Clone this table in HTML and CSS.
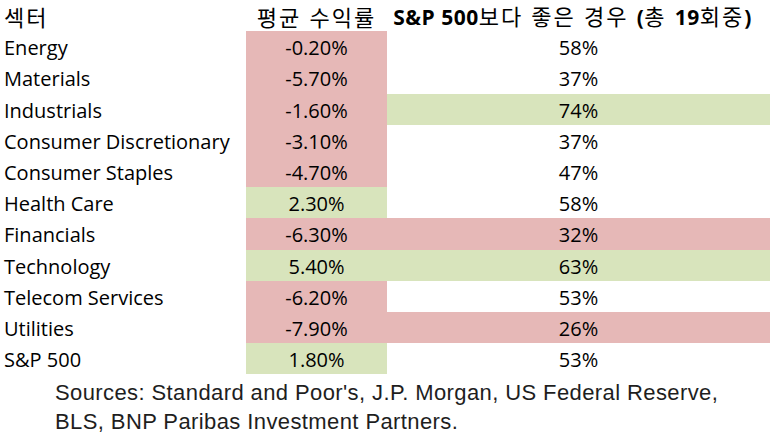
FILE: index.html
```html
<!DOCTYPE html>
<html lang="ko">
<head>
<meta charset="utf-8">
<link rel="stylesheet" href="styles.css">
</head>
<body>
<div class="table">
  <div class="cell head name">섹터</div>
  <div class="cell head center">평균 수익률</div>
  <div class="cell head center"><span class="wide"><b>S&amp;P 500</b>보다 좋은 경우 <b>(</b>총 <b>19</b>회중<b>)</b></span></div>

  <div class="cell name">Energy</div><div class="cell center neg">-0.20%</div><div class="cell center">58%</div>
  <div class="cell name">Materials</div><div class="cell center neg">-5.70%</div><div class="cell center">37%</div>
  <div class="cell name">Industrials</div><div class="cell center neg">-1.60%</div><div class="cell center pos">74%</div>
  <div class="cell name">Consumer Discretionary</div><div class="cell center neg">-3.10%</div><div class="cell center">37%</div>
  <div class="cell name">Consumer Staples</div><div class="cell center neg">-4.70%</div><div class="cell center">47%</div>
  <div class="cell name">Health Care</div><div class="cell center pos">2.30%</div><div class="cell center">58%</div>
  <div class="cell name">Financials</div><div class="cell center neg">-6.30%</div><div class="cell center neg">32%</div>
  <div class="cell name">Technology</div><div class="cell center pos">5.40%</div><div class="cell center pos">63%</div>
  <div class="cell name">Telecom Services</div><div class="cell center neg">-6.20%</div><div class="cell center">53%</div>
  <div class="cell name">Utilities</div><div class="cell center neg">-7.90%</div><div class="cell center neg">26%</div>
  <div class="cell name">S&amp;P 500</div><div class="cell center pos">1.80%</div><div class="cell center">53%</div>
</div>
<p class="sources">Sources: Standard and Poor's, J.P. Morgan, US Federal Reserve,<br>BLS, BNP Paribas Investment Partners.</p>
</body>
</html>
```
FILE: styles.css
```css
html, body {
  margin: 0;
  padding: 0;
  background: #ffffff;
}
body {
  width: 770px;
  height: 435px;
  overflow: hidden;
}
.table {
  display: grid;
  grid-template-columns: 246px 141px 383px;
  grid-auto-rows: 31.2px;
  font-family: "Open Sans", "Noto Sans CJK KR", sans-serif;
  font-size: 20px;
  color: #000000;
}
.cell {
  display: flex;
  align-items: center;
  white-space: nowrap;
  padding-top: 2px;
}
.name {
  padding-left: 4px;
}
.center {
  justify-content: center;
}
.head {
  font-family: "Noto Sans CJK KR", sans-serif;
  font-size: 22px;
  line-height: 28px;
  letter-spacing: 2px;
  padding-top: 1px;
}
.wide {
  margin-right: 12px;
  letter-spacing: 2px;
}
.head b {
  font-family: "Open Sans", sans-serif;
  font-weight: 700;
  font-size: 21px;
  letter-spacing: 0.5px;
}
.neg {
  background: #e6b8b7;
}
.pos {
  background: #d8e4bc;
}
.sources {
  margin: 4px 0 0 55px;
  font-family: "Liberation Sans", Arial, sans-serif;
  font-size: 22px;
  letter-spacing: 0.4px;
  line-height: 29px;
  color: #1e1e1e;
}
```
